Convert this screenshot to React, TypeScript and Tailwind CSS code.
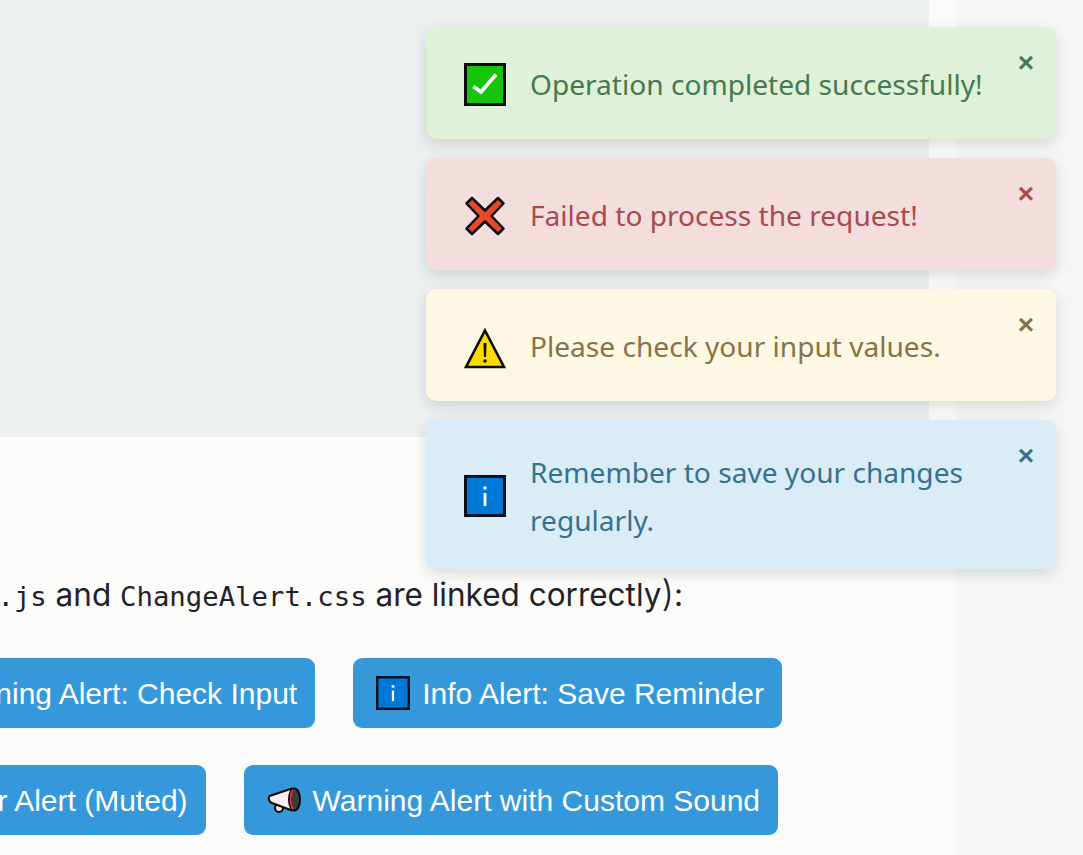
const buttonClass =
  "flex h-[70px] shrink-0 items-center gap-[12px] whitespace-nowrap rounded-[9px] bg-[#3498db] pl-[23px] pr-[18px] font-['Liberation_Sans',sans-serif] text-[30px] text-white";

function CheckIcon() {
  return (
    <svg width="42" height="43" viewBox="0 0 42 43" className="mt-[1px] shrink-0">
      <rect x="1.5" y="1.5" width="39" height="40" fill="#16c60c" stroke="#0a0a0a" strokeWidth="3" />
      <path d="M9.500 23.500l7.500 5.500L32 11.500" fill="none" stroke="#ffffff" strokeWidth="3.600" strokeLinejoin="miter" />
    </svg>
  );
}

function CrossIcon() {
  return (
    <svg width="42" height="40" viewBox="0 0 42 40" className="mt-[2px] shrink-0">
      <path
        d="M8 2L21 14.500 34 2l5.500 5.500L27.500 20l12 12.500-5.500 5.500L21 25.500 8 38l-5.500-5.500L14.500 20 2.500 7.500z"
        fill="#e8492a"
        stroke="#0a0a0a"
        strokeWidth="2.500"
        strokeLinejoin="round"
      />
    </svg>
  );
}

function WarnIcon() {
  return (
    <svg width="42" height="41" viewBox="0 0 42 41" className="mt-[5px] shrink-0">
      <path d="M21 2.500L40 39H2z" fill="#fcdb00" stroke="#0a0a0a" strokeWidth="2.600" strokeLinejoin="miter" />
      <path d="M19.400 15h3.200l-.6 14h-2z" fill="#111111" />
      <circle cx="21" cy="33" r="1.800" fill="#111111" />
    </svg>
  );
}

function InfoIcon({ size = 42 }: { size?: number }) {
  return (
    <svg width={size} height={size} viewBox="0 0 42 42" className="shrink-0">
      <rect x="1.500" y="1.500" width="39" height="39" fill="#0078d7" stroke="#05101c" strokeWidth="3" />
      <rect x="19.600" y="18" width="2.800" height="13" fill="#ffffff" />
      <circle cx="21" cy="13" r="1.800" fill="#ffffff" />
    </svg>
  );
}

function MegaphoneIcon() {
  return (
    <svg width="34" height="27" viewBox="0 0 34 27" className="shrink-0">
      <circle cx="12" cy="21" r="4" fill="#f6e6e6" stroke="#0a0a0a" strokeWidth="2" />
      <path d="M2.500 9L25 1.500V23.500L5 16c-3-1-4-5-2.500-7z" fill="#fbeeee" stroke="#0a0a0a" strokeWidth="2" strokeLinejoin="round" />
      <ellipse cx="27.500" cy="12.500" rx="5.500" ry="11" fill="#3c3c3c" stroke="#0a0a0a" strokeWidth="2" />
      <path d="M26 2.500c-3.500 5-3.500 15 0 20" fill="none" stroke="#e0364a" strokeWidth="1.500" />
    </svg>
  );
}

function Toast(props: { bg: string; color: string; pad?: string; icon: React.ReactNode; text: string }) {
  return (
    <div
      className={`relative flex min-h-[112px] items-center gap-6 rounded-[10px] pl-[38px] pr-[70px] shadow-[0_5px_15px_rgba(0,0,0,0.13)] ${props.pad ?? "pb-[25px] pt-[27px]"} ${props.bg} ${props.color}`}
    >
      {props.icon}
      <p className="font-['Noto_Sans',sans-serif] text-[28.1px] leading-[48px]">{props.text}</p>
      <span className="absolute right-[22px] top-[21px] font-['Liberation_Sans',sans-serif] text-[28px] font-bold leading-[30px]">
        ×
      </span>
    </div>
  );
}

export default function App() {
  return (
    <div className="relative h-[855px] w-full overflow-hidden bg-[#f5f6f6]">
      <main className="flex h-full w-[956px] flex-col bg-[#fbfbfa]">
        <div className="h-[437px] w-[929px] shrink-0 bg-[#ecf0f1]" />

        <p className="mt-[134px] flex w-[683px] justify-end whitespace-nowrap font-['Inter',sans-serif] text-[31.5px] leading-[48px] text-[#1f2328]">
          <span>
            <code className="font-['DejaVu_Sans_Mono',monospace] text-[27.3px]">ChangeAlert.js</code> and{" "}
            <code className="font-['DejaVu_Sans_Mono',monospace] text-[27.3px]">ChangeAlert.css</code> are linked correctly
            <span className="text-[36px] font-light leading-[36px]">)</span>:
          </span>
        </p>

        <div className="mt-[37px] flex w-[782px] justify-end gap-[38px]">
          <button className={buttonClass}>Warning Alert: Check Input</button>
          <button className={buttonClass}>
            <InfoIcon size={34} />
            Info Alert: Save Reminder
          </button>
        </div>

        <div className="mt-[37px] flex w-[778px] justify-end gap-[38px]">
          <button className={buttonClass}>Error Alert (Muted)</button>
          <button className={buttonClass}>
            <MegaphoneIcon />
            Warning Alert with Custom Sound
          </button>
        </div>
      </main>

      <div className="absolute right-[27px] top-[27px] flex w-[630px] flex-col gap-[19px]">
        <Toast bg="bg-[#dff1d9]" color="text-[#45794f]" icon={<CheckIcon />} text="Operation completed successfully!" />
        <Toast bg="bg-[#f4dddd]" color="text-[#a94a4e]" icon={<CrossIcon />} text="Failed to process the request!" />
        <Toast bg="bg-[#fcf8e3]" color="text-[#8a7248]" icon={<WarnIcon />} text="Please check your input values." />
        <Toast
          bg="bg-[#d9ecf7]"
          color="text-[#37718f]"
          pad="pb-[25px] pt-[28px]"
          icon={<InfoIcon />}
          text="Remember to save your changes regularly."
        />
      </div>
    </div>
  );
}
